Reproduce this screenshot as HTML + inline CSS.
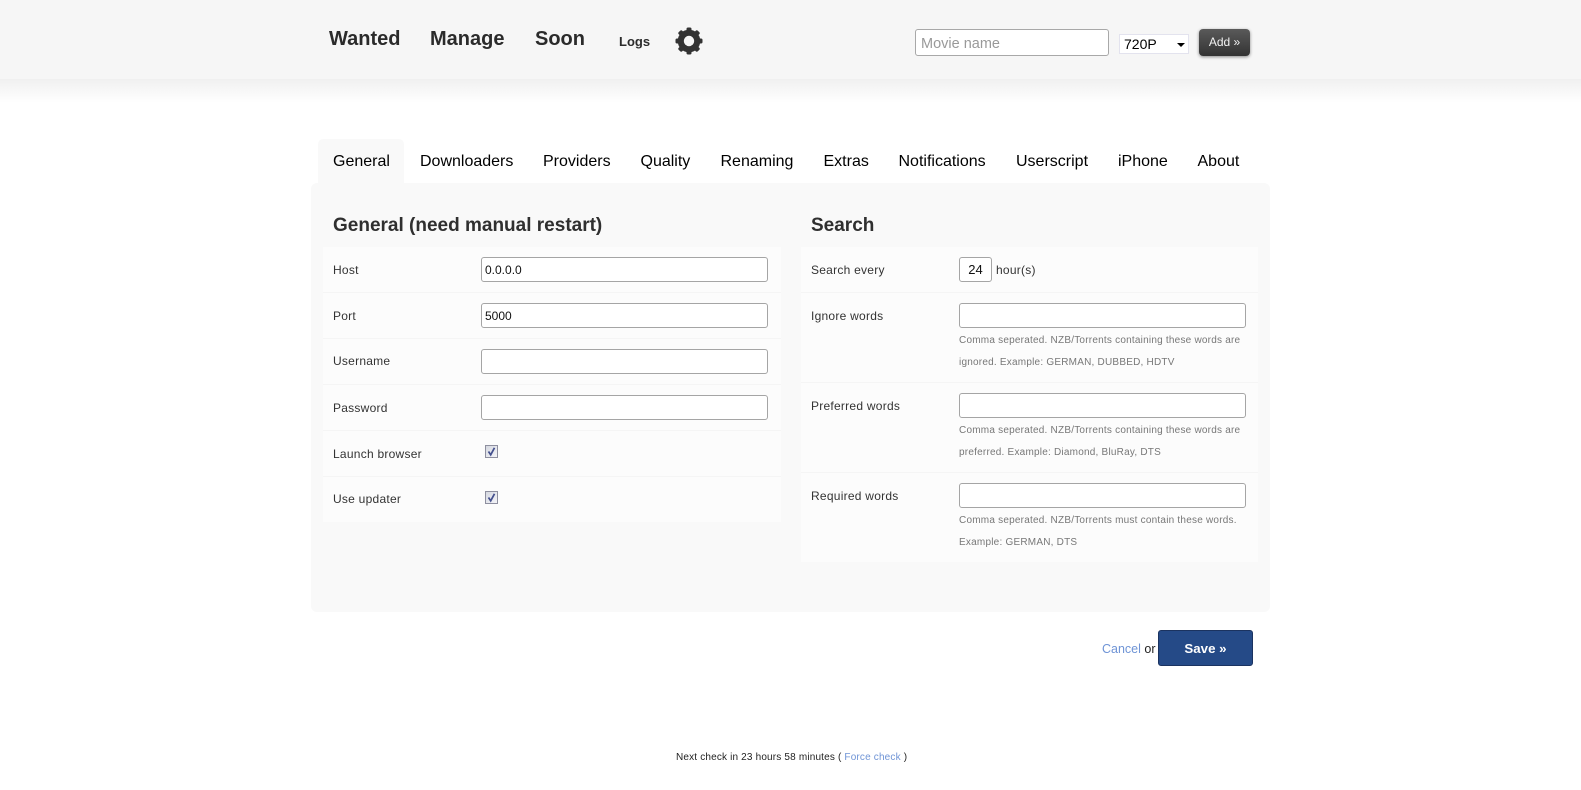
<!DOCTYPE html>
<html><head><meta charset="utf-8"><title>Settings</title>
<style>
html,body{margin:0;padding:0;width:1581px;height:790px;overflow:hidden;background:#fff}
body{font-family:"Liberation Sans",Arial,sans-serif;color:#222;position:relative}
.a{position:absolute;white-space:nowrap}
.nav{top:27px;font-size:20px;font-weight:bold;line-height:24px;color:#2b2b2b}
.tab{top:152px;font-size:16px;line-height:20px;color:#000}
.lab{font-size:12px;line-height:16px;color:#333;letter-spacing:.25px}
.inp{background:#fff;border:1px solid #a5a5a5;border-radius:3px;box-sizing:border-box;height:25px;font-size:12px;line-height:24px;padding-left:3px;color:#111}
.sep{height:1px;background:#f5f5f5}
.hint{font-size:10px;line-height:14px;color:#777;letter-spacing:.22px}
.cb{width:13px;height:13px;box-sizing:border-box;border:1px solid #8e8f9f;background:linear-gradient(135deg,#d5d8e0,#f4f4f8)}
h2{margin:0;font-size:19px;line-height:24px;font-weight:bold;color:#2f2f2f}
</style></head><body>
<div class="a" style="left:0;top:79px;width:1581px;height:24px;background:linear-gradient(#f0f0f0,#fff)"></div>
<div class="a" style="left:0;top:0;width:1581px;height:79px;background:#f6f6f6"></div>
<div class="a nav" style="left:329px">Wanted</div>
<div class="a nav" style="left:430px">Manage</div>
<div class="a nav" style="left:535px">Soon</div>
<div class="a" style="left:619px;top:34px;font-size:13px;line-height:16px;font-weight:bold;color:#2b2b2b">Logs</div>
<svg class="a" style="left:674px;top:26px" width="30" height="30" viewBox="0 0 30 30">
<g fill="#333"><circle cx="15" cy="15" r="11.3"/>
<rect x="12.5" y="1.5" width="5" height="6" rx="1.5"/><rect x="12.5" y="22.5" width="5" height="6" rx="1.5"/>
<rect x="12.5" y="1.5" width="5" height="6" rx="1.5" transform="rotate(45 15 15)"/><rect x="12.5" y="22.5" width="5" height="6" rx="1.5" transform="rotate(45 15 15)"/>
<rect x="12.5" y="1.5" width="5" height="6" rx="1.5" transform="rotate(90 15 15)"/><rect x="12.5" y="22.5" width="5" height="6" rx="1.5" transform="rotate(90 15 15)"/>
<rect x="12.5" y="1.5" width="5" height="6" rx="1.5" transform="rotate(135 15 15)"/><rect x="12.5" y="22.5" width="5" height="6" rx="1.5" transform="rotate(135 15 15)"/></g>
<circle cx="15" cy="15" r="5.2" fill="#f6f6f6"/></svg>
<div class="a" style="left:915px;top:29px;width:194px;height:27px;box-sizing:border-box;background:#fff;border:1px solid #a8a8a8;border-radius:3px;font-size:14.5px;line-height:29px;padding-left:5px;color:#999">Movie name</div>
<div class="a" style="left:1119px;top:34px;width:70px;height:20px;box-sizing:border-box;background:#fff;border:1px solid #e3e3ee;font-size:14px;line-height:19px;padding-left:4px;color:#000">720P</div>
<div class="a" style="left:1177px;top:43px;width:0;height:0;border-left:4px solid transparent;border-right:4px solid transparent;border-top:4px solid #000"></div>
<div class="a" style="left:1199px;top:29px;width:51px;height:27px;border-radius:4px;background:linear-gradient(#5a5a5a,#333);box-shadow:0 1px 3px rgba(0,0,0,.45);color:#f2f2f2;font-size:12px;line-height:27px;text-align:center">Add »</div>

<div class="a" style="left:318px;top:139px;width:86px;height:46px;background:#f9f9f9;border-radius:5px 5px 0 0"></div>
<div class="a" style="left:311px;top:183px;width:959px;height:429px;background:#f9f9f9;border-radius:6px"></div>
<div class="a tab" style="left:333px">General</div>
<div class="a tab" style="left:420px">Downloaders</div>
<div class="a tab" style="left:543px">Providers</div>
<div class="a tab" style="left:640.5px">Quality</div>
<div class="a tab" style="left:720.5px">Renaming</div>
<div class="a tab" style="left:823.5px">Extras</div>
<div class="a tab" style="left:898.5px">Notifications</div>
<div class="a tab" style="left:1016px">Userscript</div>
<div class="a tab" style="left:1118px">iPhone</div>
<div class="a tab" style="left:1197.5px">About</div>

<h2 class="a" style="left:333px;top:214px">General (need manual restart)</h2>
<h2 class="a" style="left:811px;top:214px">Search</h2>

<div class="a" style="left:323px;top:247px;width:458px;height:275px;background:#fcfcfc"></div>
<div class="a sep" style="left:323px;top:292px;width:458px"></div>
<div class="a sep" style="left:323px;top:338px;width:458px"></div>
<div class="a sep" style="left:323px;top:384px;width:458px"></div>
<div class="a sep" style="left:323px;top:430px;width:458px"></div>
<div class="a sep" style="left:323px;top:476px;width:458px"></div>

<div class="a lab" style="left:333px;top:262px">Host</div>
<div class="a inp" style="left:481px;top:257px;width:287px">0.0.0.0</div>
<div class="a lab" style="left:333px;top:308px">Port</div>
<div class="a inp" style="left:481px;top:303px;width:287px">5000</div>
<div class="a lab" style="left:333px;top:353px">Username</div>
<div class="a inp" style="left:481px;top:349px;width:287px"></div>
<div class="a lab" style="left:333px;top:400px">Password</div>
<div class="a inp" style="left:481px;top:395px;width:287px"></div>
<div class="a lab" style="left:333px;top:446px">Launch browser</div>
<div class="a cb" style="left:485px;top:445px"></div>
<svg class="a" style="left:485px;top:445px" width="13" height="13" viewBox="0 0 13 13"><path d="M3.5 6.5L5.7 9.8L9.5 2.8" fill="none" stroke="#44508e" stroke-width="1.7"/></svg>
<div class="a lab" style="left:333px;top:491px">Use updater</div>
<div class="a cb" style="left:485px;top:491px"></div>
<svg class="a" style="left:485px;top:491px" width="13" height="13" viewBox="0 0 13 13"><path d="M3.5 6.5L5.7 9.8L9.5 2.8" fill="none" stroke="#44508e" stroke-width="1.7"/></svg>

<div class="a" style="left:801px;top:247px;width:457px;height:315px;background:#fcfcfc"></div>
<div class="a sep" style="left:801px;top:292px;width:457px"></div>
<div class="a sep" style="left:801px;top:382px;width:457px"></div>
<div class="a sep" style="left:801px;top:472px;width:457px"></div>

<div class="a lab" style="left:811px;top:262px">Search every</div>
<div class="a inp" style="left:959px;top:257px;width:33px;text-align:center;padding:0;font-size:13px">24</div>
<div class="a lab" style="left:996px;top:262px">hour(s)</div>
<div class="a lab" style="left:811px;top:308px">Ignore words</div>
<div class="a inp" style="left:959px;top:303px;width:287px"></div>
<div class="a hint" style="left:959px;top:334px">Comma seperated. NZB/Torrents containing these words are</div>
<div class="a hint" style="left:959px;top:356px">ignored. Example: GERMAN, DUBBED, HDTV</div>
<div class="a lab" style="left:811px;top:398px">Preferred words</div>
<div class="a inp" style="left:959px;top:393px;width:287px"></div>
<div class="a hint" style="left:959px;top:424px">Comma seperated. NZB/Torrents containing these words are</div>
<div class="a hint" style="left:959px;top:446px">preferred. Example: Diamond, BluRay, DTS</div>
<div class="a lab" style="left:811px;top:488px">Required words</div>
<div class="a inp" style="left:959px;top:483px;width:287px"></div>
<div class="a hint" style="left:959px;top:514px">Comma seperated. NZB/Torrents must contain these words.</div>
<div class="a hint" style="left:959px;top:536px">Example: GERMAN, DTS</div>

<div class="a" style="left:1102px;top:641px;font-size:12.5px;line-height:16px;color:#6f94d6">Cancel <span style="color:#222">or</span></div>
<div class="a" style="left:1158px;top:630px;width:95px;height:36px;box-sizing:border-box;background:#254a87;border:1px solid #1b3360;border-radius:3px;color:#fff;font-size:13.3px;font-weight:bold;line-height:36px;text-align:center">Save »</div>

<div class="a" style="left:676px;top:751px;font-size:10px;line-height:13px;color:#222;letter-spacing:.17px">Next check in 23 hours 58 minutes ( <span style="color:#6f94d6">Force check</span> )</div>
</body></html>
